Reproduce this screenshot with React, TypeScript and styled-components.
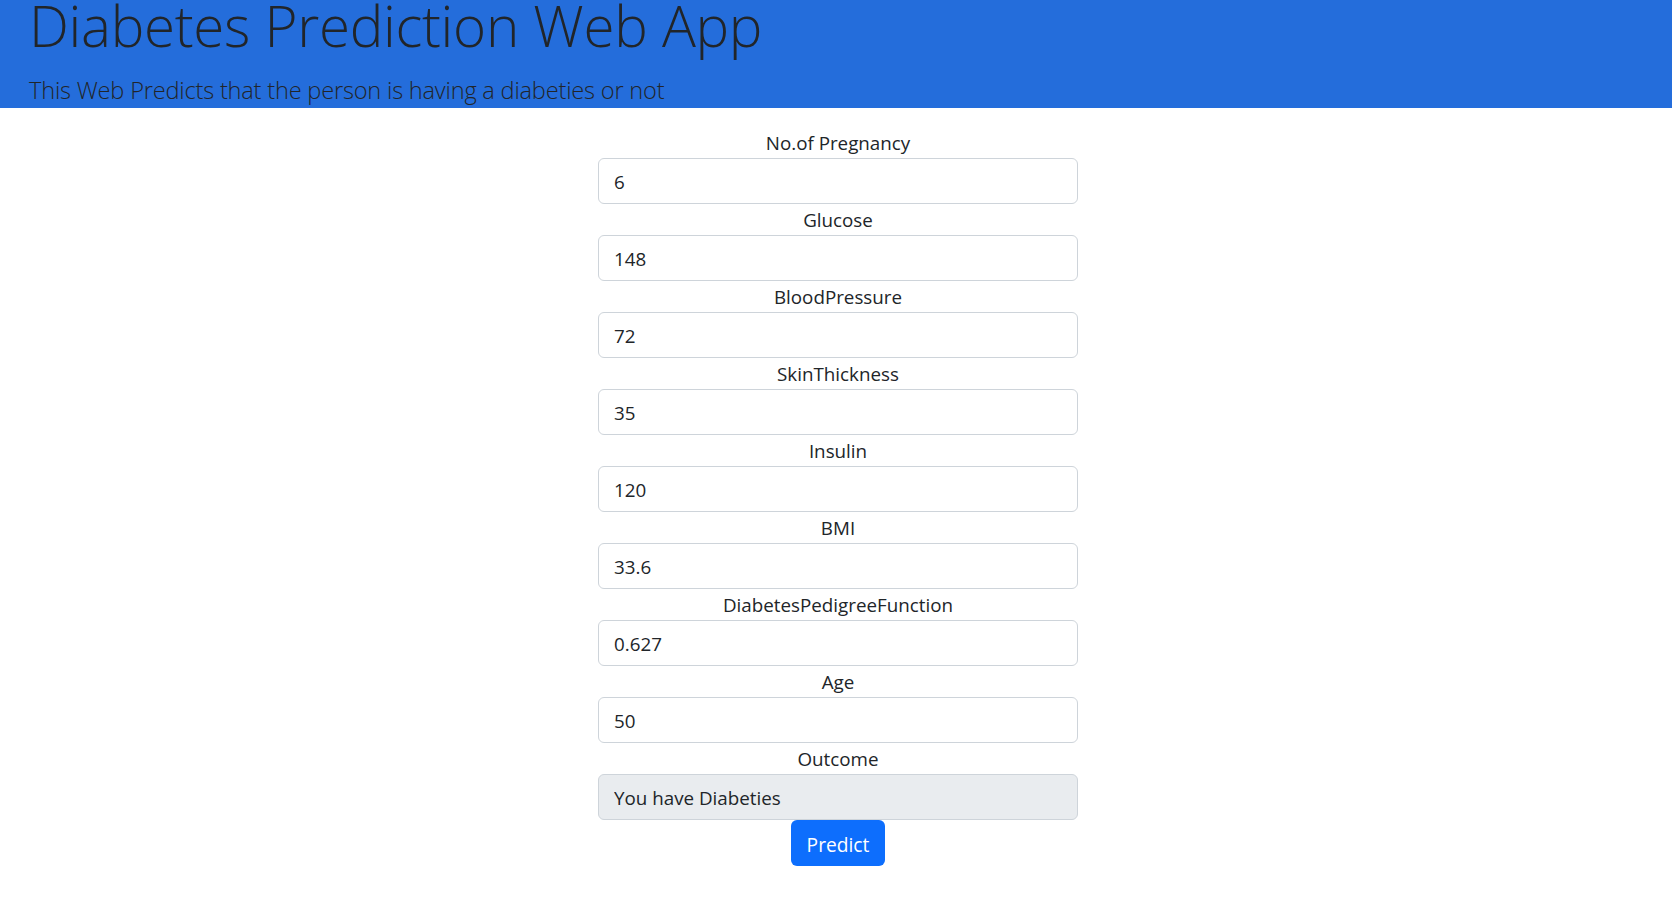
import React from "react";
import styled, { createGlobalStyle } from "styled-components";

const GlobalStyle = createGlobalStyle`
  html, body {
    margin: 0;
    padding: 0;
    background: #ffffff;
    font-family: "Open Sans", "Noto Sans", sans-serif;
    color: #212529;
  }
  * { box-sizing: border-box; }
`;

const Header = styled.header`
  background: #246ddb;
  height: 108px;
  padding: 0 29px;
  overflow: hidden;
  color: #212529;
  > h1 {
    margin: -7px 0 0;
    font-size: 56.5px;
    font-weight: 300;
    line-height: 66px;
    letter-spacing: -0.3px;
  }
  > p {
    margin: 16px 0 0;
    font-size: 23.6px;
    font-weight: 300;
    line-height: 30px;
    letter-spacing: -0.2px;
  }
`;

const Main = styled.main`
  padding: 19px 0 0 4px;
`;

const Form = styled.form`
  width: 480px;
  margin: 0 auto;
  display: flex;
  flex-direction: column;
  align-items: center;
`;

const Field = styled.label`
  width: 100%;
  display: flex;
  flex-direction: column;
  > span {
    text-align: center;
    font-size: 18.8px;
    line-height: 31px;
    padding-top: 1px;
    margin-bottom: -1px;
  }
`;

const Input = styled.input<{ $readonly?: boolean }>`
  display: block;
  width: 100%;
  height: 46px;
  padding: 2px 15px 0;
  font-family: inherit;
  font-size: 18.8px;
  color: #212529;
  background: ${(p) => (p.$readonly ? "#e9ecef" : "#ffffff")};
  border: 1px solid #ced4da;
  border-radius: 6px;
  outline: none;
`;

const PredictButton = styled.button`
  height: 46px;
  padding: 2px 16px 0;
  font-family: inherit;
  font-size: 19.2px;
  color: #ffffff;
  background: #0d6efd;
  border: none;
  border-radius: 6px;
  cursor: pointer;
`;

const fields = [
  ["No.of Pregnancy", "6"],
  ["Glucose", "148"],
  ["BloodPressure", "72"],
  ["SkinThickness", "35"],
  ["Insulin", "120"],
  ["BMI", "33.6"],
  ["DiabetesPedigreeFunction", "0.627"],
  ["Age", "50"],
];

export default function App() {
  return (
    <>
      <GlobalStyle />
      <Header>
        <h1>Diabetes Prediction Web App</h1>
        <p>This Web Predicts that the person is having a diabeties or not</p>
      </Header>
      <Main>
        <Form onSubmit={(e) => e.preventDefault()}>
          {fields.map(([label, value]) => (
            <Field key={label}>
              <span>{label}</span>
              <Input type="text" defaultValue={value} />
            </Field>
          ))}
          <Field>
            <span>Outcome</span>
            <Input type="text" value="You have Diabeties" readOnly $readonly />
          </Field>
          <PredictButton type="submit">Predict</PredictButton>
        </Form>
      </Main>
    </>
  );
}
